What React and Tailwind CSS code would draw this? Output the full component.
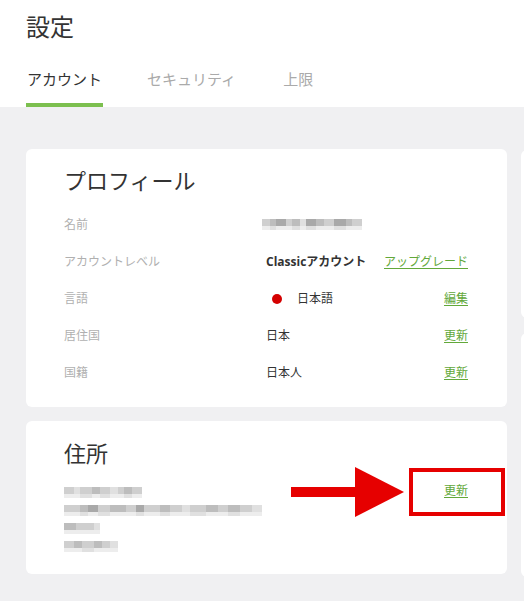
import React from "react";

const SHADES = {
  a: "bg-[#a9a9a9]",
  b: "bg-[#bdbdbd]",
  c: "bg-[#cfcfcf]",
  d: "bg-[#e0e0e0]",
  e: "bg-[#ededed]",
};

const WIDTHS = {
  4: "w-[4px]",
  6: "w-[6px]",
  8: "w-[8px]",
  10: "w-[10px]",
  12: "w-[12px]",
  16: "w-[16px]",
};

// Pixelated placeholder for hidden personal data
const Pixels = ({ rows, className = "" }) => (
  <div className={`flex flex-col blur-[0.6px] ${className}`}>
    {rows.map((row, i) => (
      <div key={i} className="flex">
        {row.map(([w, s, h], j) => (
          <span
            key={j}
            className={`${SHADES[s]} ${WIDTHS[w]} block ${h === "s" ? "h-[4px]" : "h-[7px]"}`}
          />
        ))}
      </div>
    ))}
  </div>
);

const Row = ({ label, children, action }) => (
  <div className="flex h-[37px] items-center text-[12px]">
    <div className="w-[202px] shrink-0 text-[#b0b0b0]">{label}</div>
    <div className="flex flex-1 items-center text-[#333]">{children}</div>
    {action && (
      <a href="#" className="text-[#62a83a] underline underline-offset-2">
        {action}
      </a>
    )}
  </div>
);

export default function App() {
  return (
    <div
      className="h-[601px] overflow-hidden bg-[#f0f0f2]"
      style={{ fontFamily: '"Open Sans", "Noto Sans CJK JP", sans-serif' }}
    >
      <header className="bg-white px-[26px]">
        <h1 className="pt-[11px] text-[24px] leading-[32px] text-[#333]">設定</h1>
        <nav className="mt-[24px] flex gap-[44px] text-[15px] leading-[24px]">
          <button className="border-b-4 border-[#7cbf4f] px-[1px] pb-[12px] text-[#333]">
            アカウント
          </button>
          <button className="border-b-4 border-transparent pb-[12px] text-[#aaa]">
            セキュリティ
          </button>
          <button className="ml-[3px] border-b-4 border-transparent pb-[12px] text-[#aaa]">
            上限
          </button>
        </nav>
      </header>

      <main className="flex gap-[14px] pl-[26px] pt-[42px]">
        <div className="flex w-[481px] shrink-0 flex-col gap-[14px]">
          {/* Profile */}
          <section className="rounded-[6px] bg-white pb-[16px] pl-[38px] pr-[39px] pt-[16px]">
            <h2 className="text-[22px] leading-[30px] text-[#333]">プロフィール</h2>
            <div className="mt-[11px]">
              <Row label="名前">
                <Pixels
                  className="-ml-[4px]"
                  rows={[
                    [[8, "c"], [6, "b"], [10, "a"], [6, "c"], [8, "b"], [6, "d"], [10, "a"], [8, "b"], [10, "c"], [12, "a"], [6, "b"], [10, "c"]],
                    [[8, "e", "s"], [6, "d", "s"], [10, "e", "s"], [6, "e", "s"], [8, "d", "s"], [6, "e", "s"], [10, "d", "s"], [8, "e", "s"], [10, "e", "s"], [12, "d", "s"], [6, "e", "s"], [10, "e", "s"]],
                  ]}
                />
              </Row>
              <Row label="アカウントレベル" action="アップグレード">
                <span className="font-bold">Classicアカウント</span>
              </Row>
              <Row label="言語" action="編集">
                <span className="ml-[6px] h-[10px] w-[10px] rounded-full bg-[#d40000]" />
                <span className="ml-[15px]">日本語</span>
              </Row>
              <Row label="居住国" action="更新">
                日本
              </Row>
              <Row label="国籍" action="更新">
                日本人
              </Row>
            </div>
          </section>

          {/* Address */}
          <section className="relative rounded-[6px] bg-white pb-[22px] pl-[38px] pr-[39px] pt-[17px]">
            <h2 className="text-[22px] leading-[30px] text-[#333]">住所</h2>
            <div className="mt-[19px] flex items-start">
              <div className="flex flex-1 flex-col gap-[7px]">
                <Pixels
                  rows={[
                    [[10, "c"], [6, "d"], [12, "c"], [8, "b"], [10, "c"], [8, "d"], [6, "c"], [8, "b"], [10, "c"]],
                    [[10, "e", "s"], [6, "e", "s"], [12, "d", "s"], [8, "e", "s"], [10, "d", "s"], [8, "e", "s"], [6, "e", "s"], [8, "d", "s"], [10, "e", "s"]],
                  ]}
                />
                <Pixels
                  rows={[
                    [[16, "c"], [8, "b"], [10, "a"], [12, "c"], [16, "b"], [10, "c"], [8, "a"], [16, "c"], [10, "b"], [12, "c"], [8, "d"], [16, "c"], [12, "b"], [10, "c"], [12, "b"], [12, "c"], [10, "d"]],
                    [[16, "e", "s"], [8, "d", "s"], [10, "e", "s"], [12, "d", "s"], [16, "e", "s"], [10, "e", "s"], [8, "d", "s"], [16, "e", "s"], [10, "d", "s"], [12, "e", "s"], [8, "e", "s"], [16, "d", "s"], [12, "e", "s"], [10, "e", "s"], [12, "d", "s"], [12, "e", "s"], [10, "e", "s"]],
                  ]}
                />
                <Pixels
                  rows={[
                    [[12, "b"], [10, "c"], [8, "c"], [6, "d"]],
                    [[12, "e", "s"], [10, "e", "s"], [8, "e", "s"], [6, "e", "s"]],
                  ]}
                />
                <Pixels
                  rows={[
                    [[10, "c"], [8, "b"], [12, "c"], [8, "b"], [8, "c"], [8, "d"]],
                    [[10, "e", "s"], [8, "e", "s"], [12, "d", "s"], [8, "e", "s"], [8, "e", "s"], [8, "e", "s"]],
                  ]}
                />
              </div>
              <a href="#" className="mt-[-5px] text-[12px] text-[#62a83a] underline underline-offset-2">
                更新
              </a>
            </div>

            {/* Callout pointing at the update link */}
            <svg
              className="absolute left-[265px] top-[46px]"
              width="113"
              height="50"
              viewBox="0 0 113 50"
            >
              <rect x="0" y="20" width="66" height="10" fill="#e60000" />
              <polygon points="64,0 113,25 64,50" fill="#e60000" />
            </svg>
            <div className="absolute left-[383px] top-[47px] h-[48px] w-[96px] border-[4px] border-[#e60000]" />
          </section>
        </div>

        {/* Next column peeking in from the right */}
        <div className="flex w-[20px] shrink-0 flex-col gap-[15px] pt-[1px]">
          <div className="h-[168px] rounded-[6px] bg-white" />
          <div className="h-[244px] rounded-[6px] bg-white" />
        </div>
      </main>
    </div>
  );
}
